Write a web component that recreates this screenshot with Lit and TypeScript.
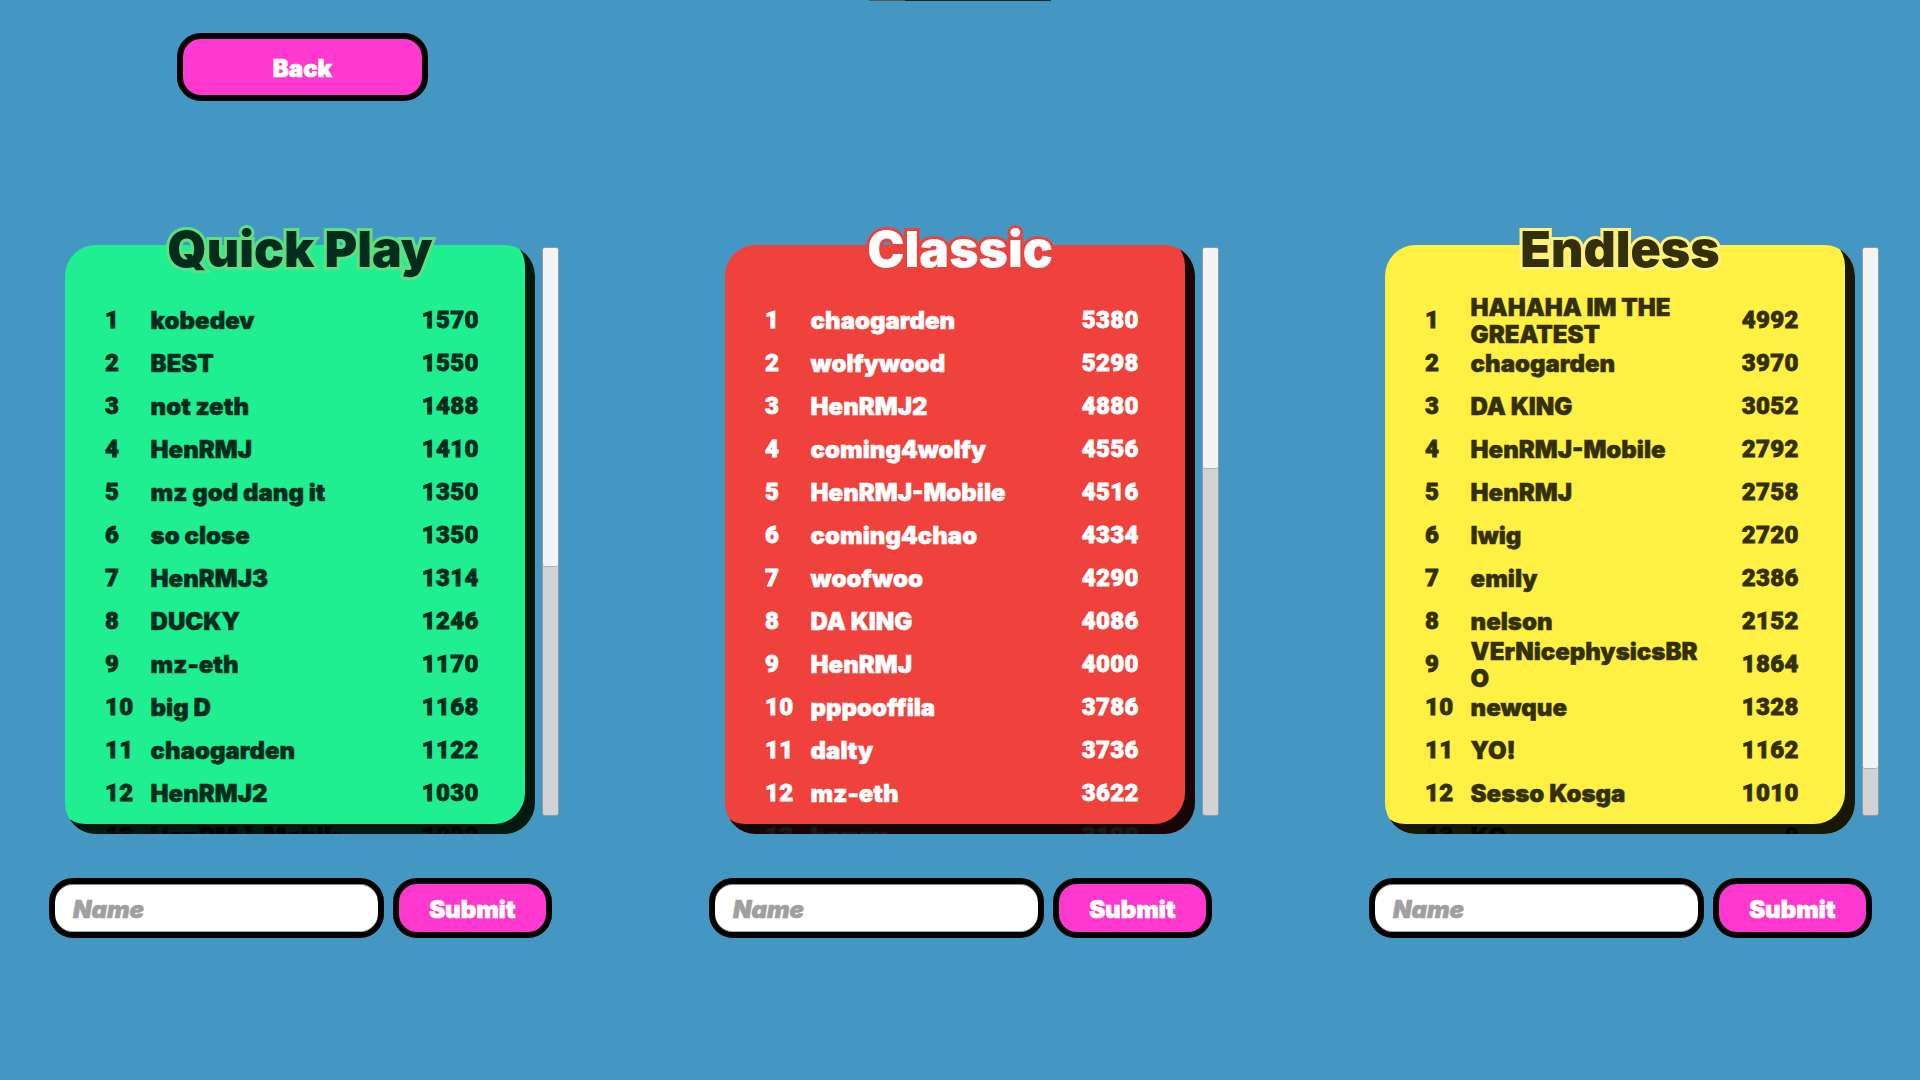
import { LitElement, html, css } from "lit";
import { customElement } from "lit/decorators.js";

type Board = {
  title: string;
  tone: string;
  thumb: number;
  rows: [string, string][];
};

const BOARDS: Board[] = [
  {
    title: "Quick Play",
    tone: "green",
    thumb: 319,
    rows: [
      ["kobedev", "1570"], ["BEST", "1550"], ["not zeth", "1488"], ["HenRMJ", "1410"],
      ["mz god dang it", "1350"], ["so close", "1350"], ["HenRMJ3", "1314"], ["DUCKY", "1246"],
      ["mz-eth", "1170"], ["big D", "1168"], ["chaogarden", "1122"], ["HenRMJ2", "1030"],
      ["HenRMJ-Mobile", "1022"],
    ],
  },
  {
    title: "Classic",
    tone: "red",
    thumb: 221,
    rows: [
      ["chaogarden", "5380"], ["wolfywood", "5298"], ["HenRMJ2", "4880"], ["coming4wolfy", "4556"],
      ["HenRMJ-Mobile", "4516"], ["coming4chao", "4334"], ["woofwoo", "4290"], ["DA KING", "4086"],
      ["HenRMJ", "4000"], ["pppooffila", "3786"], ["dalty", "3736"], ["mz-eth", "3622"],
      ["harum", "3100"],
    ],
  },
  {
    title: "Endless",
    tone: "yellow",
    thumb: 521,
    rows: [
      ["HAHAHA IM THE GREATEST", "4992"], ["chaogarden", "3970"], ["DA KING", "3052"], ["HenRMJ-Mobile", "2792"],
      ["HenRMJ", "2758"], ["lwig", "2720"], ["emily", "2386"], ["nelson", "2152"],
      ["VErNicephysicsBRO", "1864"], ["newque", "1328"], ["YO!", "1162"], ["Sesso Kosga", "1010"],
      ["KO", "0"],
    ],
  },
];

@customElement("app-root")
export class AppRoot extends LitElement {
  static styles = css`
    :host {
      display: block;
      width: 1920px;
      height: 1080px;
      overflow: hidden;
      background: #4597c3;
      font-family: Inter, Roboto, sans-serif;
      font-weight: 900;
      color: #fff;
    }
    .page {
      display: flex;
      flex-direction: column;
      height: 1080px;
    }
    .topbar {
      display: flex;
      width: 182px;
      height: 1px;
      margin-left: 869px;
      background: #222;
    }
    .topbar i {
      width: 36px;
      background: #555;
    }
    .back {
      box-sizing: border-box;
      width: 251px;
      height: 68px;
      margin: 32px 0 0 177px;
      padding-top: 2px;
      border: 6px solid #000;
      border-radius: 24px;
      background: #ff38cf;
      color: #fff;
      font-size: 24px;
      display: flex;
      align-items: center;
      justify-content: center;
      -webkit-text-stroke: 0.6px #fff;
    }
    .columns {
      display: flex;
      gap: 157px;
      margin: 144px 0 0 49px;
    }
    .col {
      width: 503px;
      display: flex;
      flex-direction: column;
    }
    .top {
      display: flex;
      width: 510px;
      box-sizing: border-box;
      padding-left: 16px;
      gap: 7px;
    }
    .board {
      position: relative;
      flex: none;
      width: 470px;
      height: 589px;
    }
    .title {
      position: absolute;
      z-index: 2;
      left: 0;
      width: 470px;
      top: -25px;
      text-align: center;
      font-size: 50px;
      line-height: 58px;
      -webkit-text-stroke: 6px var(--stroke);
      paint-order: stroke fill;
      color: var(--ink);
    }
    .scroll {
      position: relative;
      height: 100%;
      overflow: hidden;
      border-radius: 31px;
      background: var(--bg);
      color: var(--ink);
      box-sizing: border-box;
      padding-top: 54px;
    }
    .shade {
      position: absolute;
      inset: 0;
      z-index: 1;
      border-radius: 31px;
      box-shadow: inset -10px -10px 0 rgba(0, 0, 0, 0.9);
      pointer-events: none;
    }
    .row {
      display: grid;
      grid-template-columns: 45.6px 236px 92px;
      grid-template-rows: 43px;
      align-items: center;
      height: 43px;
      margin-left: 40px;
      font-size: 24px;
      line-height: 27px;
      -webkit-text-stroke: 0.5px currentColor;
    }
    .num {
      font-family: Roboto, sans-serif;
      letter-spacing: 0.3px;
      -webkit-text-stroke: 0.8px currentColor;
    }
    .name {
      overflow-wrap: anywhere;
    }
    .score {
      text-align: right;
    }
    .bar {
      flex: none;
      box-sizing: border-box;
      width: 17px;
      height: 569px;
      margin-top: 2px;
      border: 1px solid #8f9aa2;
      border-radius: 3px;
      background: #d3d3d3;
      overflow: hidden;
    }
    .thumb {
      box-sizing: border-box;
      border-bottom: 1px solid #a8aeb2;
      border-radius: 0 0 3px 3px;
      background: #f4f4f4;
    }
    .form {
      display: flex;
      gap: 9px;
      margin-top: 44px;
    }
    .input {
      box-sizing: border-box;
      width: 336px;
      height: 60px;
      border: 6px solid #000;
      border-radius: 24px;
      background: #fff;
      box-shadow: inset 0 1px 0 #888, inset 0 -1px 0 #aaa;
      padding: 2px 0 0 18px;
      color: #a0a0a0;
      font-size: 24px;
      font-style: italic;
      display: flex;
      align-items: center;
      -webkit-text-stroke: 0.6px #a0a0a0;
    }
    .submit {
      box-sizing: border-box;
      width: 160px;
      height: 60px;
      padding-top: 2px;
      border: 6px solid #000;
      border-radius: 24px;
      background: #ff38cf;
      font-size: 24px;
      display: flex;
      align-items: center;
      justify-content: center;
      -webkit-text-stroke: 0.6px #fff;
    }
    .green { --bg: #20ef91; --ink: #032c1c; --stroke: #5fdf85; }
    .red { --bg: #ef423d; --ink: #ffffff; --stroke: #e8443f; }
    .yellow { --bg: #fff044; --ink: #332f08; --stroke: #fff27a; }
  `;

  render() {
    return html`
      <div class="page">
        <div class="topbar"><i></i></div>
        <div class="back">Back</div>
        <div class="columns">
          ${BOARDS.map(
            (b) => html`
              <section class="col ${b.tone}">
                <div class="top">
                  <div class="board">
                    <div class="title">${b.title}</div>
                    <div class="scroll">
                      ${b.rows.map(
                        (r, i) => html`
                          <div class="row">
                            <span class="num">${i + 1}</span>
                            <span class="name">${r[0]}</span>
                            <span class="num score">${r[1]}</span>
                          </div>
                        `
                      )}
                    </div>
                    <div class="shade"></div>
                  </div>
                  <div class="bar">
                    <div class="thumb" style="height:${b.thumb}px"></div>
                  </div>
                </div>
                <div class="form">
                  <div class="input">Name</div>
                  <div class="submit">Submit</div>
                </div>
              </section>
            `
          )}
        </div>
      </div>
    `;
  }
}
